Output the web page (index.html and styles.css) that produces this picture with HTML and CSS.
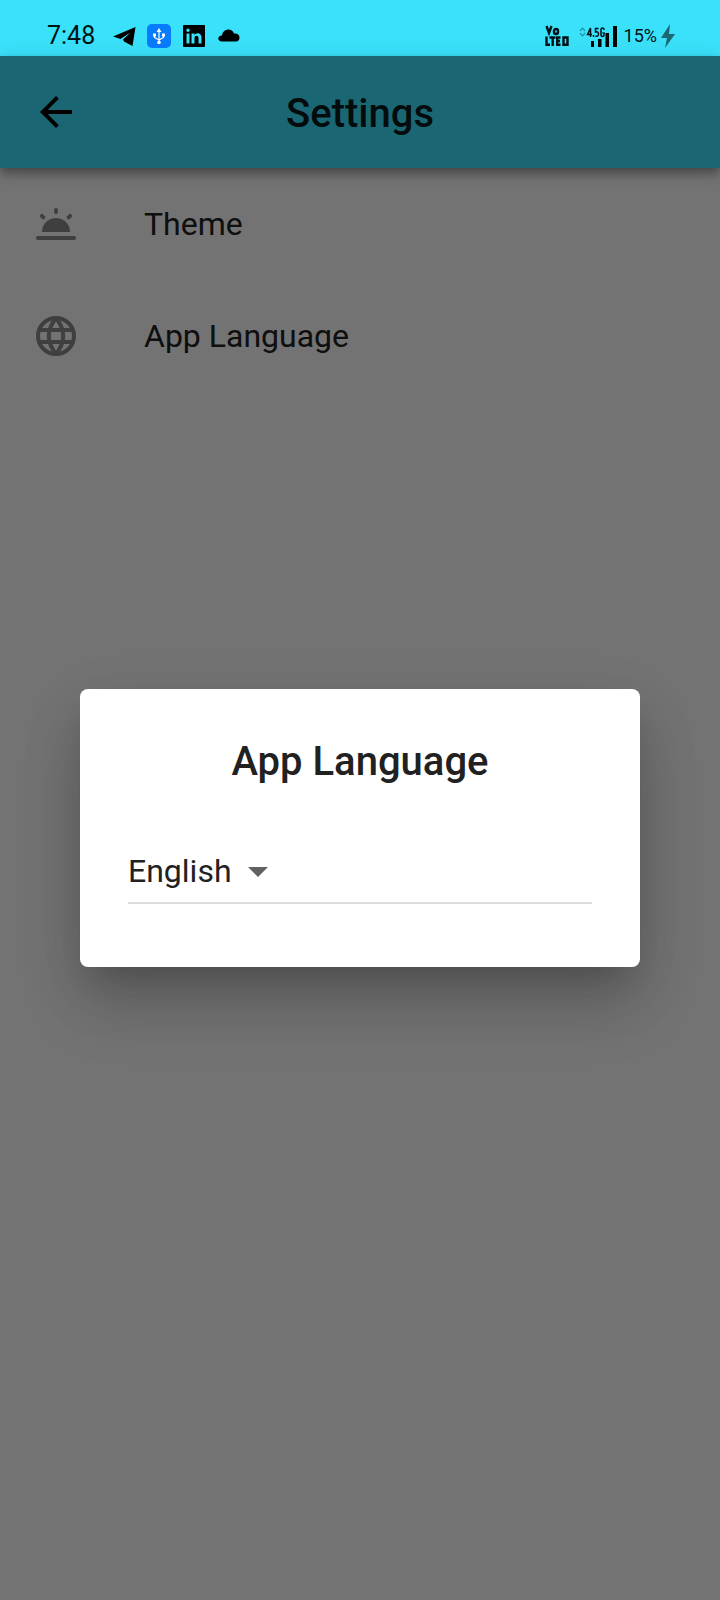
FILE: index.html
```html
<!DOCTYPE html>
<html lang="en">
<head>
<meta charset="utf-8">
<meta name="viewport" content="width=device-width, initial-scale=1">
<title>Settings</title>
<link rel="stylesheet" href="styles.css">
</head>
<body>
<div class="screen">
  <div class="status-bar">
    <div class="status-left">
      <span class="clock">7:48</span>
      <svg class="status-icon" viewBox="0 0 24 24" aria-hidden="true"><path d="M1 12.500 23.500 3 20.500 22 12 17.500 11 15.500 18.500 8.500 8.500 15z"/></svg>
      <svg class="status-icon" viewBox="0 0 24 24" aria-hidden="true"><rect width="24" height="24" rx="5" fill="#087cff"/><g fill="none" stroke="#fff" stroke-width="1.200"><path d="M12 7v11M7.500 11v2.500L12 16l4.500-2.500V11"/></g><path fill="#fff" d="M12 4l2.500 4h-5zM6 9.500h3v3H6zM15 9.500h3v3h-3z"/><circle cx="12" cy="18.500" r="1.800" fill="#fff"/></svg>
      <svg class="status-icon" viewBox="0 0 24 24" aria-hidden="true"><path fill-rule="evenodd" d="M2 1h20q1 0 1 1v20q0 1-1 1H2q-1 0-1-1V2q0-1 1-1zM4.500 9.500v10h3v-10zM6 4.500a1.700 1.700 0 1 0 0 3.500 1.700 1.700 0 0 0 0-3.500zM9.500 9.500v10h3V14c0-3 4-3 4 0v5.500h3v-6c0-5-5-5.500-7-2.500V9.500z"/></svg>
      <svg class="status-icon" viewBox="0 0 24 24" aria-hidden="true"><path d="M5 17.500c-5 0-5-6 0-6 1-7 10-8 12-2 7-1 7 8 2 8z"/></svg>
    </div>
    <div class="status-right">
      <svg class="volte" viewBox="0 0 24 22" aria-hidden="true"><g fill="none" stroke="#001215" stroke-width="2.400"><path d="M1.500 1 4 8 6.500 1M11 4a2 2 0 0 1 2 2v1a2 2 0 0 1-4 0V6a2 2 0 0 1 2-2M1.500 11.500v8.300h3.500M4.500 12.500h6M7.700 12.500V21M15.500 12.500h-3.300v7.300h3.300M12 16h3M18.500 12.500h4v7.300h-4z"/></g></svg>
      <svg class="signal" viewBox="0 0 38 24" aria-hidden="true"><g fill="none" stroke="#209eae" stroke-width="1.400"><path d="M1 7l2.500-3L6 7M1 9l2.500 3L6 9"/></g><path d="M12 17h3v6h-3zM19 15h3.500v8H19zM26.500 9H30v14h-3.500zM34 2h4v21h-4z"/><g fill="none" stroke="#001215" stroke-width="1.500"><path d="M11.500 13V4L8.500 10.500H13M14.500 11v2M19.500 4.500h-3v3.500q3-1 3 2 0 3-3 2M25 6q0-2-1.500-2T22 6v4.500q0 2 1.500 2t1.500-2V9h-1.500"/></g></svg>
      <span class="battery">15%</span>
      <svg class="bolt" viewBox="0 0 14 24" aria-hidden="true"><path fill="#1b6873" d="M9 0 0 14h6L4 24l10-14H8z"/></svg>
    </div>
  </div>
  <div class="app">
    <header class="app-bar">
      <button class="back" type="button" aria-label="Back"><svg class="icon" viewBox="0 0 24 24" aria-hidden="true"><path d="M20 11H7.830l5.590-5.590L12 4l-8 8 8 8 1.410-1.410L7.830 13H20v-2z"/></svg></button>
      <h1 class="app-title">Settings</h1>
    </header>
    <nav class="settings">
      <button class="setting" type="button">
        <svg class="icon" viewBox="0 0 24 24" aria-hidden="true"><path d="M5 16a7 7 0 0 1 14 0z"/><rect x="2" y="18" width="20" height="2" rx="1"/><rect x="11" y="4" width="2" height="3" rx="1"/><rect x="11" y="4" width="2" height="3" rx="1" transform="translate(-6.700 2.800) rotate(-45 12 5.500)"/><rect x="11" y="4" width="2" height="3" rx="1" transform="translate(6.700 2.800) rotate(45 12 5.500)"/></svg>
        <span>Theme</span>
      </button>
      <button class="setting" type="button">
        <svg class="icon" viewBox="0 0 24 24" aria-hidden="true"><g class="globe"><circle cx="12" cy="12" r="9"/><path d="M3.500 9h17M3.500 15h17M12 3Q4.800 12 12 21M12 3Q19.200 12 12 21"/></g></svg>
        <span>App Language</span>
      </button>
    </nav>
    <div class="scrim">
      <section class="dialog" role="dialog" aria-modal="true" aria-labelledby="dialog-title">
        <h2 class="dialog-title" id="dialog-title">App Language</h2>
        <div class="field">
          <select class="language" aria-labelledby="dialog-title"><option>English</option></select>
          <svg class="caret" viewBox="0 0 20 10" aria-hidden="true"><path fill="#616161" d="M0 0h20L10 10z"/></svg>
        </div>
      </section>
    </div>
  </div>
</div>
</body>
</html>
```

FILE: styles.css
```css
* { box-sizing: border-box; }
body { margin: 0; font-family: Roboto, sans-serif; color: #212121; }
button, select { font: inherit; color: inherit; background: none; border: 0; padding: 0; margin: 0; }
h1, h2 { margin: 0; font-size: 40px; line-height: 50px; font-weight: 500; }
svg { flex: none; }

.screen { min-height: 100vh; display: flex; flex-direction: column; }

.status-bar {
  height: 56px;
  padding: 16px 45px 0 47px;
  display: flex;
  justify-content: space-between;
  background: #3ae1fa;
  color: #001215;
}
.status-left, .status-right { display: flex; align-items: center; }
.status-left { gap: 11px; }
.clock { font-size: 25px; line-height: 40px; margin-right: 6px; }
.status-icon { width: 24px; height: 24px; }
.volte { width: 24px; height: 22px; margin-right: 10px; }
.signal { width: 38px; height: 24px; margin-right: 7px; }
.battery { font-size: 18px; line-height: 40px; margin-right: 4px; }
.bolt { width: 14px; height: 24px; }

.app { flex: 1; position: relative; background: #fafafa; }
.app-bar {
  height: 112px;
  padding: 0 32px;
  display: grid;
  grid-template-columns: 48px 1fr 48px;
  align-items: center;
  background: #3ae1fa;
  color: #08191c;
  box-shadow: 0 4px 8px rgba(0, 0, 0, .2), 0 8px 10px rgba(0, 0, 0, .14), 0 2px 20px rgba(0, 0, 0, .12);
}
.app-title { padding-top: 4px; text-align: center; }
.icon { display: block; width: 48px; height: 48px; }
.back { color: #000; }

.setting {
  width: 100%;
  height: 112px;
  padding: 0 32px;
  display: flex;
  align-items: center;
  gap: 64px;
  font-size: 32px;
  text-align: left;
}
.setting .icon { fill: #8a8a8a; }
.setting .globe { fill: none; stroke: #8a8a8a; stroke-width: 2; }

.scrim {
  position: absolute;
  inset: 0;
  display: grid;
  align-items: center;
  padding: 48px 80px;
  background: rgba(0, 0, 0, .54);
}
.dialog {
  padding: 48px 48px 63px;
  border-radius: 8px;
  background: #fff;
  box-shadow: 0 22px 30px -14px rgba(0, 0, 0, .16), 0 40px 64px rgba(0, 0, 0, .14), 0 20px 64px rgba(0, 0, 0, .1);
}
.dialog-title { text-align: center; }
.field {
  margin-top: 32px;
  height: 85px;
  padding-top: 23px;
  display: flex;
  align-items: center;
  gap: 16px;
  border-bottom: 2px solid #dcdcdc;
}
.language { appearance: none; padding-bottom: 2px; font-size: 32px; line-height: 48px; }
.caret { width: 20px; height: 10px; }
```
